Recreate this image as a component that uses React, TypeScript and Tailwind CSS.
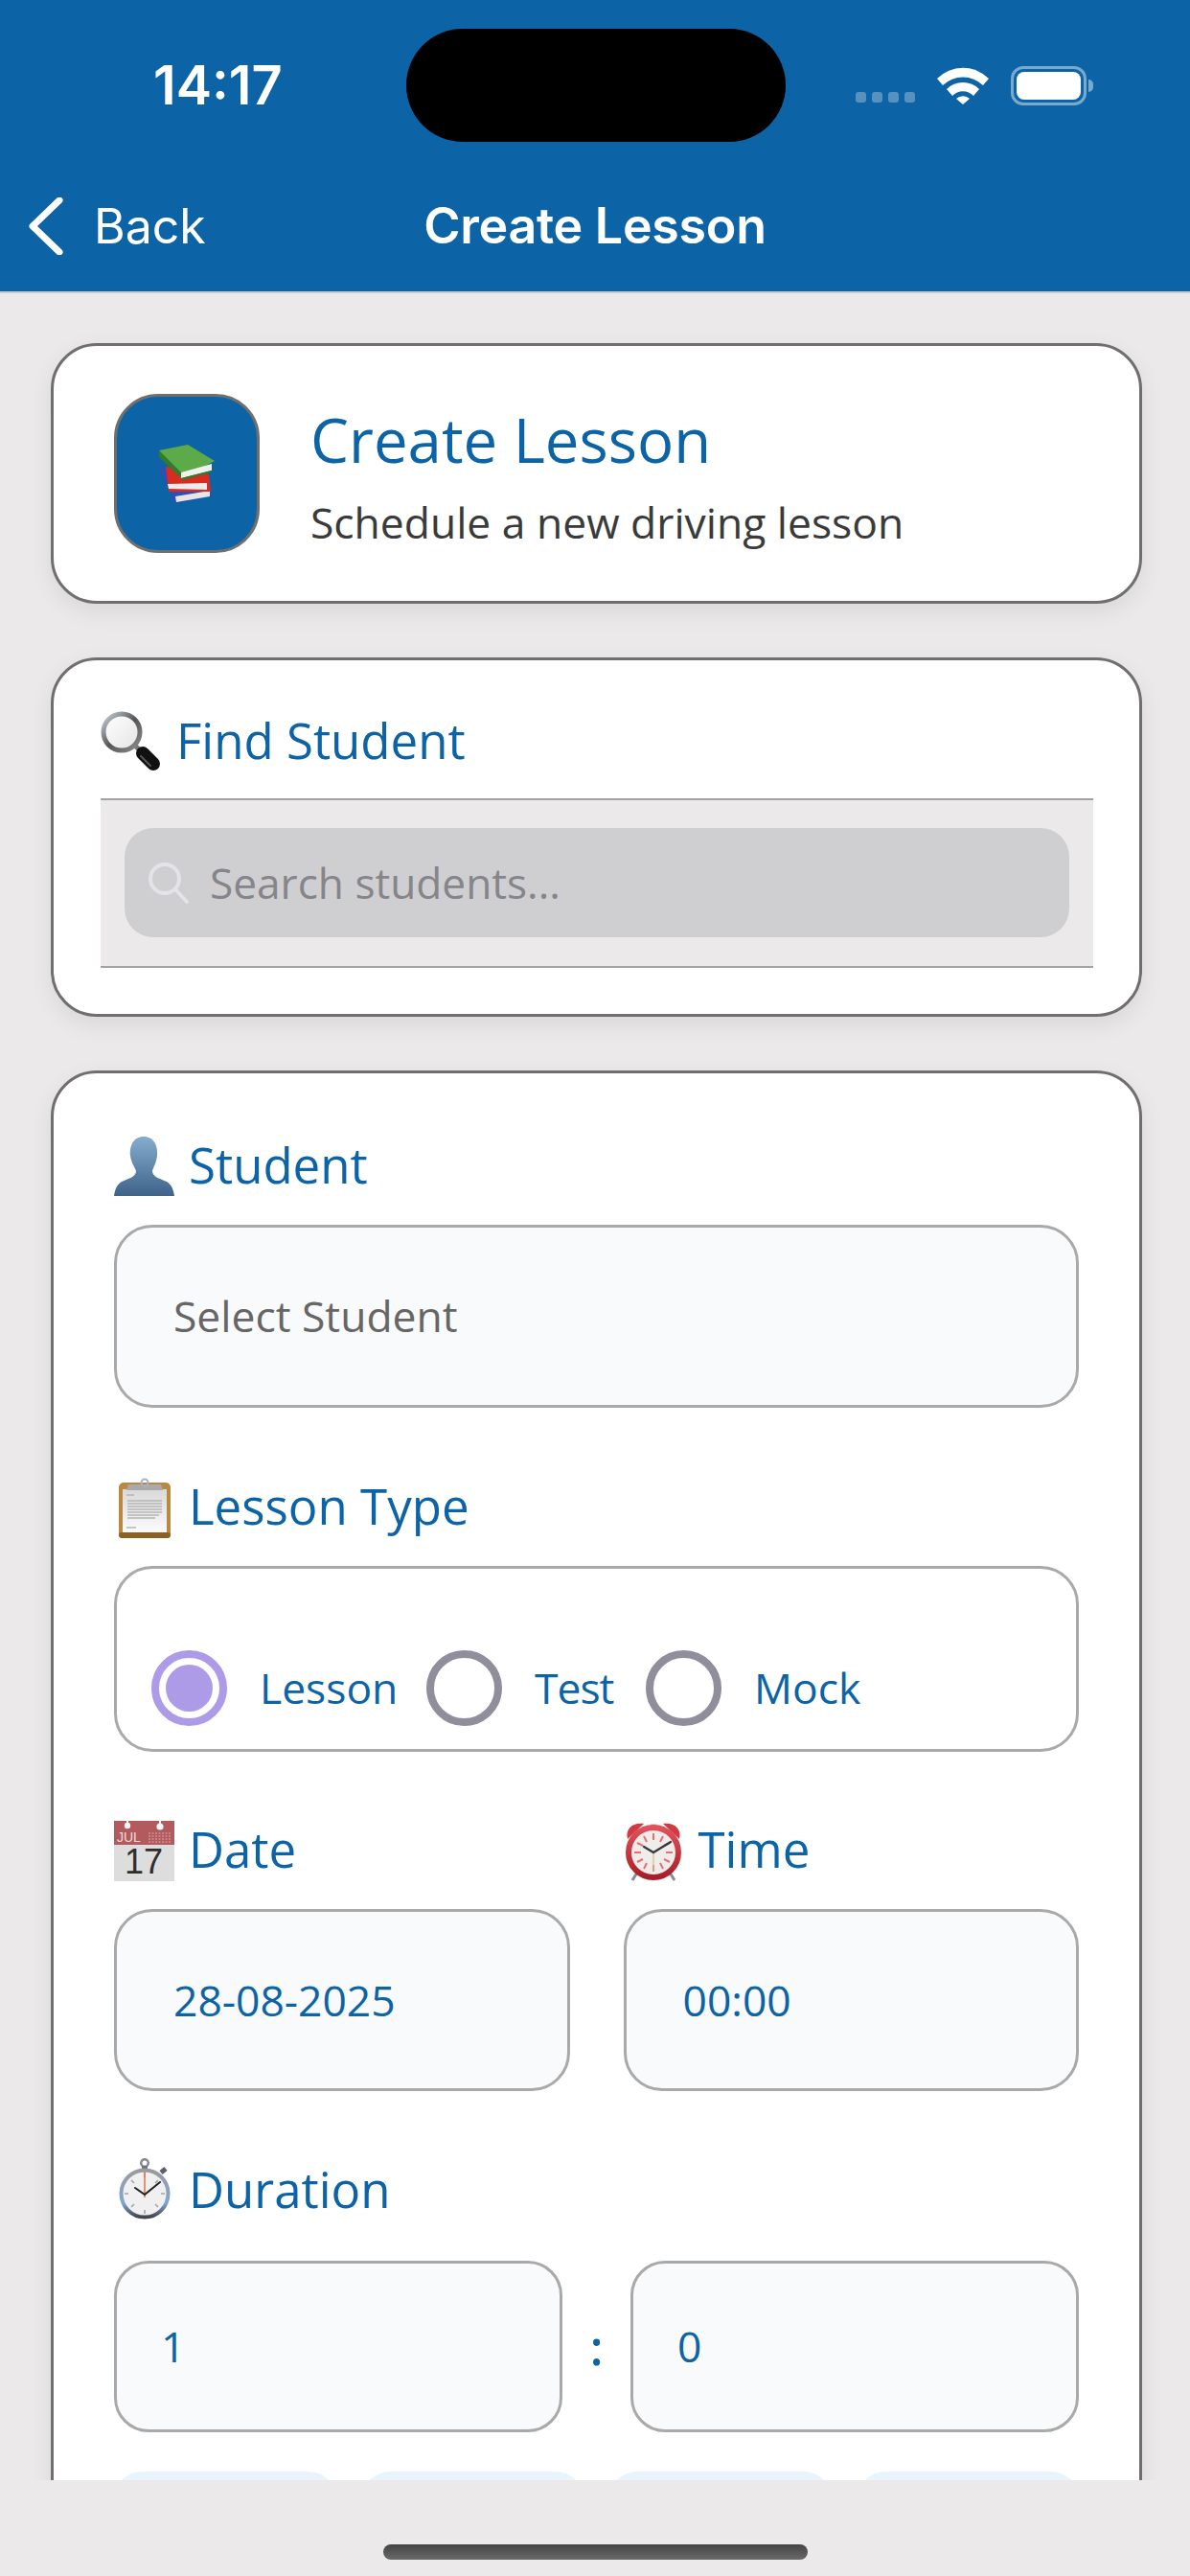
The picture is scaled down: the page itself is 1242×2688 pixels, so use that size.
import { ReactNode } from "react";

function BooksEmoji() {
  return (
    <svg width="60" height="61" viewBox="0 0 60 61">
      <path d="M0 23 L18 61 L55 54 L56 46 L24 30 Z" fill="#2f4fb5" />
      <path d="M18 54 L54 48 L54 54 L19 60 Z" fill="#e6e6e6" />
      <path d="M8 23 L53 31 L55 49 L11 49 Z" fill="#d92b20" />
      <path d="M10 41 L51 40 L51 47 L11 46 Z" fill="#ececec" />
      <path d="M1 6 L31 0 L59 17 L24 35 Z" fill="#5cab48" />
      <path d="M1 6 L24 29 L24 35 L1 13 Z" fill="#337a2a" />
      <path d="M24 29 L56 20 L56 27 L24 35 Z" fill="#f0f0f0" />
      <path d="M24 35 L59 26 L52 30 L25 37 Z" fill="#2f7d28" />
    </svg>
  );
}

function MagnifierEmoji() {
  return (
    <svg width="62" height="62" viewBox="0 0 62 62">
      <defs>
        <linearGradient id="ring" x1="0" y1="0" x2="1" y2="1">
          <stop offset="0" stopColor="#c9d3dd" />
          <stop offset="0.5" stopColor="#555555" />
          <stop offset="1" stopColor="#8d8d8d" />
        </linearGradient>
        <linearGradient id="glass" x1="0" y1="0" x2="1" y2="1">
          <stop offset="0" stopColor="#ffffff" />
          <stop offset="1" stopColor="#e4e4e4" />
        </linearGradient>
      </defs>
      <path d="M35 35 L43 43" stroke="#777777" strokeWidth="5" />
      <path d="M44 44 L55 55" stroke="#111111" strokeWidth="14" strokeLinecap="round" />
      <path d="M42 47 L52 57" stroke="#555555" strokeWidth="2" strokeLinecap="round" />
      <circle cx="22" cy="22" r="19" fill="url(#glass)" stroke="url(#ring)" strokeWidth="5" />
    </svg>
  );
}

function BustEmoji() {
  return (
    <svg width="63" height="62" viewBox="0 0 63 62">
      <defs>
        <linearGradient id="bust" x1="0" y1="0" x2="0" y2="1">
          <stop offset="0" stopColor="#86add0" />
          <stop offset="1" stopColor="#3e6288" />
        </linearGradient>
      </defs>
      <path
        d="M31 0 C42 0 46 10 45 20 C44 28 41 32 40 36 C40 42 48 44 55 47 C60 50 62 55 63 62 L0 62 C1 55 3 50 8 47 C15 44 23 42 23 36 C22 32 18 28 17 20 C16 10 20 0 31 0 Z"
        fill="url(#bust)"
      />
    </svg>
  );
}

function ClipboardEmoji() {
  return (
    <svg width="54" height="63" viewBox="0 0 54 63">
      <defs>
        <linearGradient id="paper" x1="0" y1="0" x2="0" y2="1">
          <stop offset="0" stopColor="#d9d9d9" />
          <stop offset="1" stopColor="#fbfbfb" />
        </linearGradient>
      </defs>
      <rect x="0" y="5" width="54" height="58" rx="5" fill="#b8893f" />
      <rect x="0" y="57" width="54" height="6" rx="3" fill="#8b6022" />
      <rect x="4" y="12" width="46" height="45" fill="url(#paper)" />
      <path d="M9 24 H45 M9 27 H45 M9 30 H45 M9 33 H45 M9 36 H45 M9 39 H42 M9 42 H38" stroke="#b5b5b5" strokeWidth="1.4" />
      <path d="M8 18 H16 M8 52 H18" stroke="#b5b5b5" strokeWidth="1.4" />
      <path d="M8 13 L10 7 H44 L46 13 Z" fill="#a9aaac" />
      <circle cx="27" cy="5" r="3.5" fill="none" stroke="#a6b4c6" strokeWidth="2" />
    </svg>
  );
}

function CalendarEmoji() {
  return (
    <svg width="63" height="63" viewBox="0 0 63 63">
      <rect x="0" y="0" width="63" height="25" fill="#b25a5e" />
      <rect x="0" y="25" width="63" height="38" fill="#dddddd" />
      <path d="M14 0 V5 M48 0 V5" stroke="#f5f5f5" strokeWidth="2" />
      <circle cx="14" cy="5" r="3.2" fill="#f5f5f5" />
      <circle cx="48" cy="6" r="3.6" fill="#f5f5f5" />
      <text x="3" y="22" fontSize="14" fill="#f0dcdc" fontFamily="'Liberation Sans', sans-serif">
        JUL
      </text>
      <path d="M36 13 H59 M36 16 H59 M36 19 H59 M36 22 H59" stroke="#cf8f92" strokeWidth="1.3" strokeDasharray="2 1.5" />
      <text x="31" y="55" textAnchor="middle" fontSize="36" fill="#2e2e2e" fontFamily="'Liberation Sans', sans-serif">
        17
      </text>
    </svg>
  );
}

function AlarmEmoji() {
  return (
    <svg width="60" height="63" viewBox="0 0 60 63">
      <defs>
        <linearGradient id="alarmRing" x1="0" y1="0" x2="0" y2="1">
          <stop offset="0" stopColor="#e0525a" />
          <stop offset="1" stopColor="#a81e28" />
        </linearGradient>
      </defs>
      <path d="M13 54 L8 62 M47 54 L52 62" stroke="#8a8a90" strokeWidth="3" />
      <path d="M3 19 C0 8 9 1 20 3 Z" fill="#d03a42" />
      <path d="M57 19 C60 8 51 1 40 3 Z" fill="#d03a42" />
      <path d="M27 5 H33" stroke="#aab4c0" strokeWidth="3" />
      <circle cx="30" cy="33" r="26" fill="#efecea" stroke="url(#alarmRing)" strokeWidth="6" />
      <path d="M30 13 V20 M30 46 V53 M10 33 H17 M43 33 H50 M20 16 L23 22 M40 16 L37 22 M20 50 L23 44 M40 50 L37 44 M13 23 L19 26 M47 23 L41 26 M13 43 L19 40 M47 43 L41 40" stroke="#e57177" strokeWidth="2" />
      <path d="M30 33 V53" stroke="#d9bc8c" strokeWidth="1.2" />
      <path d="M30 33 L20 27 M30 33 L48 22" stroke="#33363c" strokeWidth="2.2" strokeLinecap="round" />
    </svg>
  );
}

function StopwatchEmoji() {
  return (
    <svg width="54" height="64" viewBox="0 0 54 64">
      <defs>
        <linearGradient id="watchRing" x1="0" y1="0" x2="0" y2="1">
          <stop offset="0" stopColor="#9a9a9e" />
          <stop offset="0.7" stopColor="#7fa6d4" />
          <stop offset="1" stopColor="#44444c" />
        </linearGradient>
      </defs>
      <circle cx="27" cy="5" r="3.8" fill="none" stroke="#858a92" strokeWidth="2.5" />
      <rect x="24" y="8" width="6" height="4" fill="#6f747c" />
      <path d="M44 15 L49 11" stroke="#5c6068" strokeWidth="5" />
      <circle cx="27" cy="37" r="24.5" fill="#f0f0f0" stroke="url(#watchRing)" strokeWidth="4" />
      <path d="M27 14 V20 M27 54 V58 M6 37 H10 M44 37 H48 M13 23 L16 26 M41 23 L38 26 M13 51 L16 48 M41 51 L38 48" stroke="#a3a3a3" strokeWidth="1.6" />
      <path d="M27 14 V41" stroke="#e8774d" strokeWidth="1.6" />
      <path d="M27 38 L17 31 M27 38 L43 25" stroke="#222222" strokeWidth="2" strokeLinecap="round" />
    </svg>
  );
}

function FieldLabel({ icon, text }: { icon: ReactNode; text: string }) {
  return (
    <div className="flex h-[62px] items-center mb-[30px]">
      <span className="flex w-[63px] shrink-0 justify-center">{icon}</span>
      <span className="ml-[15px] pb-[4px] text-[51px] leading-none text-[#0c63a5]">{text}</span>
    </div>
  );
}

function Radio({ label, selected, labelClass }: { label: string; selected?: boolean; labelClass: string }) {
  return (
    <div className="flex items-center">
      <span
        className={
          selected
            ? "flex h-[79px] w-[79px] items-center justify-center rounded-full border-[8px] border-[#ad9be8]"
            : "flex h-[79px] w-[79px] items-center justify-center rounded-full border-[8px] border-[#918e9b]"
        }
      >
        {selected && <span className="h-[49px] w-[49px] rounded-full bg-[#ad9be8]" />}
      </span>
      <span className={`ml-[34px] text-[44.4px] leading-none text-[#0c63a5] ${labelClass}`}>{label}</span>
    </div>
  );
}

export default function App() {
  return (
    <div className="flex h-[2688px] w-[1242px] flex-col overflow-hidden bg-[#ebe9ea] font-['Open_Sans',sans-serif]">
      {/* nav header */}
      <header className="h-[306px] shrink-0 border-b-2 border-[#c5ccd3] bg-[#0c63a5] pt-[30px] font-['Inter',sans-serif] text-white">
        <div className="flex h-[118px] items-center">
          <div className="w-[424px] pl-[160px] text-[56px] font-semibold leading-none">14:17</div>
          <div className="h-[118px] w-[396px] rounded-[59px] bg-black" />
          <div className="flex items-center pl-[73px]">
            <div className="mt-[24px] flex gap-[6px]">
              <span className="h-[11px] w-[11px] rounded-[3px] bg-white/30" />
              <span className="h-[11px] w-[11px] rounded-[3px] bg-white/30" />
              <span className="h-[11px] w-[11px] rounded-[3px] bg-white/30" />
              <span className="h-[11px] w-[11px] rounded-[3px] bg-white/30" />
            </div>
            <svg className="ml-[23px]" width="54" height="39" viewBox="0 0 54 39" fill="white">
              <path d="M0 12 A38 38 0 0 1 54 12 L48 19 A30 30 0 0 0 6 19 Z" />
              <path d="M10 23 A24 24 0 0 1 44 23 L38 30 A15 15 0 0 0 16 30 Z" />
              <path d="M20 33 A10 10 0 0 1 34 33 L27 39 Z" />
            </svg>
            <div className="ml-[23px] flex items-center">
              <div className="h-[41px] w-[79px] rounded-[13px] border-[3px] border-white/45 p-[3px]">
                <div className="h-full w-full rounded-[8px] bg-white" />
              </div>
              <span className="ml-[2px] h-[13px] w-[5px] rounded-r-full bg-white/45" />
            </div>
          </div>
        </div>
        <div className="mt-[38px] grid h-[100px] grid-cols-[1fr_auto_1fr] items-center">
          <div className="flex items-center pl-[30px]">
            <svg width="36" height="60" viewBox="0 0 36 60" fill="none" stroke="white" strokeWidth="7" strokeLinecap="round" strokeLinejoin="round">
              <path d="M32 3 L4 30 L32 57" />
            </svg>
            <span className="ml-[32px] text-[50px] leading-none">Back</span>
          </div>
          <div className="text-[52px] font-semibold leading-none tracking-[-0.3px]">Create Lesson</div>
          <div />
        </div>
      </header>

      {/* scroll area, cut off by the bottom bar */}
      <main className="h-[2282px] shrink-0 overflow-hidden pl-[53px] pr-[50px] pt-[52px]">
        <section className="flex h-[272px] items-center rounded-[48px] border-[3px] border-[#6f6f6f] bg-white pl-[63px] shadow-[0_8px_24px_rgba(0,0,0,0.08)]">
          <div className="flex h-[166px] w-[152px] shrink-0 items-center justify-center rounded-[46px] border-[3px] border-[#6f6f6f] bg-[#0c63a5]">
            <BooksEmoji />
          </div>
          <div className="ml-[53px] mt-[4px]">
            <h1 className="text-[63.5px] leading-[80px] text-[#0c63a5]">Create Lesson</h1>
            <p className="mt-[17px] text-[44.4px] leading-[58px] text-[#3a3a3a]">Schedule a new driving lesson</p>
          </div>
        </section>

        <section className="mt-[56px] h-[375px] rounded-[48px] border-[3px] border-[#6f6f6f] bg-white pl-[49px] pr-[48px] pt-[53px] shadow-[0_8px_24px_rgba(0,0,0,0.08)]">
          <div className="flex h-[62px] items-center">
            <MagnifierEmoji />
            <span className="ml-[17px] pb-[2px] text-[51px] leading-none text-[#0c63a5]">Find Student</span>
          </div>
          <div className="mt-[29px] h-[177px] border-y-2 border-[#a3a3a3] bg-[#ebe9ea] px-[25px] pt-[29px]">
            <div className="flex h-[114px] items-center rounded-[30px] bg-[#cfcfd1] pl-[24px]">
              <svg width="44" height="44" viewBox="0 0 44 44" fill="none" stroke="#e3e3e8" strokeWidth="4" strokeLinecap="round">
                <circle cx="18" cy="18" r="15" />
                <path d="M29 29 L41 42" />
              </svg>
              <span className="ml-[21px] text-[44.2px] leading-none text-[#85858a]">Search students...</span>
            </div>
          </div>
        </section>

        <section className="mt-[56px] h-[1700px] rounded-[48px] border-[3px] border-[#6f6f6f] bg-white px-[63px] pt-[66px] shadow-[0_8px_24px_rgba(0,0,0,0.08)]">
          <FieldLabel icon={<BustEmoji />} text="Student" />
          <div className="flex h-[191px] items-center rounded-[40px] border-[3px] border-[#a9a9a9] bg-[#f9fafc] pl-[59px] text-[44.4px] leading-none text-[#666666]">
            Select Student
          </div>

          <div className="mt-[73px]">
            <FieldLabel icon={<ClipboardEmoji />} text="Lesson Type" />
            <div className="flex h-[194px] items-end gap-[33px] rounded-[40px] border-[3px] border-[#a9a9a9] bg-white pb-[24px] pl-[36px]">
              <Radio label="Lesson" selected labelClass="w-[141px]" />
              <Radio label="Test" labelClass="w-[83px] tracking-[-1px]" />
              <Radio label="Mock" labelClass="w-[110px]" />
            </div>
          </div>

          <div className="mt-[72px] grid grid-cols-2 gap-[56px]">
            <div>
              <FieldLabel icon={<CalendarEmoji />} text="Date" />
              <div className="flex h-[190px] items-center rounded-[40px] border-[3px] border-[#a9a9a9] bg-[#f9fafc] pl-[59px] text-[44.4px] leading-none text-[#0c63a5]">
                28-08-2025
              </div>
            </div>
            <div>
              <FieldLabel icon={<AlarmEmoji />} text="Time" />
              <div className="flex h-[190px] items-center rounded-[40px] border-[3px] border-[#a9a9a9] bg-[#f9fafc] pl-[59px] text-[44.4px] leading-none text-[#0c63a5]">
                00:00
              </div>
            </div>
          </div>

          <div className="mt-[71px] flex h-[62px] items-center">
            <span className="flex w-[63px] shrink-0 justify-center">
              <StopwatchEmoji />
            </span>
            <span className="ml-[15px] text-[51px] leading-none text-[#0c63a5]">Duration</span>
          </div>

          <div className="mt-[44px] flex h-[179px]">
            <div className="flex w-[468px] items-center rounded-[36px] border-[3px] border-[#a9a9a9] bg-[#f9fafc] pl-[46px] text-[44.4px] leading-none text-[#0c63a5]">
              1
            </div>
            <div className="flex w-[71px] items-center justify-center text-[50px] font-semibold leading-none text-[#0c63a5]">:</div>
            <div className="flex w-[468px] items-center rounded-[36px] border-[3px] border-[#a9a9a9] bg-[#f9fafc] pl-[46px] text-[44.4px] leading-none text-[#0c63a5]">
              0
            </div>
          </div>

          <div className="mt-[41px] grid grid-cols-4 gap-[27px]">
            <div className="h-[100px] rounded-[29px] bg-[#e8f3fc]" />
            <div className="h-[100px] rounded-[29px] bg-[#e8f3fc]" />
            <div className="h-[100px] rounded-[29px] bg-[#e8f3fc]" />
            <div className="h-[100px] rounded-[29px] bg-[#e8f3fc]" />
          </div>
        </section>
      </main>

      {/* home indicator */}
      <div className="flex flex-1 justify-center bg-[#ebe9ea] pt-[67px]">
        <div className="h-[16px] w-[443px] rounded-full bg-gradient-to-b from-[#444444] to-[#6a6a6a]" />
      </div>
    </div>
  );
}
